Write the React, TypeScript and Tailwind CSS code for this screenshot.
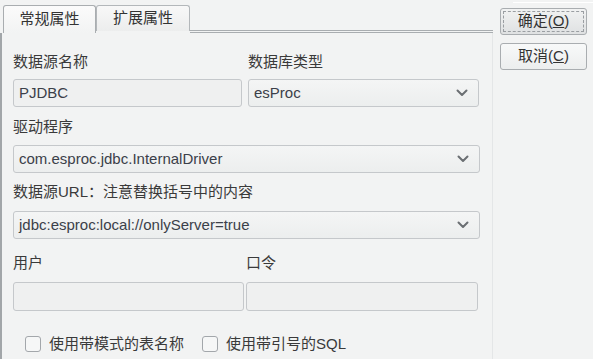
import React from 'react';

const font = { fontFamily: '"Liberation Sans", "Noto Sans CJK SC", sans-serif' };

const Chevron: React.FC = () => (
  <svg width="12" height="8" viewBox="0 0 12 8" className="text-[#6b6f73]">
    <path d="M1.5 1.5 L6 6 L10.5 1.5" fill="none" stroke="currentColor" strokeWidth="2" strokeLinecap="round" strokeLinejoin="round" />
  </svg>
);

const Field: React.FC<{ value?: string; select?: boolean; className?: string }> = ({ value, select, className }) => (
  <div
    className={`flex items-center justify-between rounded-[3px] border border-[#c5c8cb] pl-[5px] pr-[10px] text-[15px] text-[#3b4049] ${
      select ? 'bg-gradient-to-b from-[#f4f5f5] to-[#eceeee]' : 'bg-[#eff0f0]'
    } ${className ?? ''}`}
  >
    <span>{value}</span>
    {select && <Chevron />}
  </div>
);

const Label: React.FC<{ children: React.ReactNode; className?: string }> = ({ children, className }) => (
  <div className={`h-[20px] leading-[20px] text-[15px] text-[#3a3a3a] ${className ?? ''}`}>{children}</div>
);

const Check: React.FC<{ label: string }> = ({ label }) => (
  <div className="flex items-center gap-[8px]">
    <div className="h-[16px] w-[16px] rounded-[3px] border border-[#a3a7ab] bg-[#f6f7f7]" />
    <span className="text-[15px] text-[#3a3a3a]">{label}</span>
  </div>
);

const App: React.FC = () => {
  return (
    <div className="relative flex h-[359px] w-[593px] overflow-hidden bg-[#f2f3f3]" style={font}>
      <div className="absolute left-[513px] top-[2px] h-px w-[80px] bg-[#ffffff]" />
      {/* left: tabbed panel */}
      <div className="flex w-[493px] flex-col">
        <div className="flex h-[33px] items-end pl-[3px]">
          <div className="flex h-[28px] w-[93px] items-center justify-center rounded-t-[3px] border border-b-0 border-[#a9adb0] bg-gradient-to-b from-[#fbfbfb] to-[#f2f3f3] text-[15px] text-[#333]">
            常规属性
          </div>
          <div className="mb-[2px] flex h-[26px] w-[94px] items-center justify-center rounded-t-[3px] border border-b-0 border-[#b3b7ba] bg-gradient-to-b from-[#f8f8f8] to-[#eceded] text-[15px] text-[#333]">
            扩展属性
          </div>
          <div className="mb-[0px] h-[3px] flex-1 border-y border-[#a9adb0]" />
        </div>
        <div className="flex flex-1 flex-col border-l-2 border-r border-l-[#a2a6a9] border-r-[#e4e6e7] pl-[11px] pr-[12px]">
          <div className="mt-[19px] flex">
            <div className="w-[235px]">
              <Label>数据源名称</Label>
              <Field value="PJDBC" className="mt-[7px] h-[28px] w-[229px]" />
            </div>
            <div>
              <Label>数据库类型</Label>
              <Field value="esProc" select className="mt-[7px] h-[28px] w-[231px]" />
            </div>
          </div>
          <Label className="mt-[10px]">驱动程序</Label>
          <Field value="com.esproc.jdbc.InternalDriver" select className="mt-[8px] h-[28px] w-[467px]" />
          <Label className="mt-[9px]">数据源URL：注意替换括号中的内容</Label>
          <Field value="jdbc:esproc:local://onlyServer=true" select className="mt-[9px] h-[28px] w-[467px]" />
          <div className="mt-[14px] flex">
            <div className="w-[233px]">
              <Label>用户</Label>
              <Field className="mt-[9px] h-[29px] w-[231px]" />
            </div>
            <div>
              <Label>口令</Label>
              <Field className="mt-[9px] h-[29px] w-[232px]" />
            </div>
          </div>
          <div className="mt-[22px] flex gap-[18px] pl-[12px]">
            <Check label="使用带模式的表名称" />
            <Check label="使用带引号的SQL" />
          </div>
        </div>
      </div>
      {/* right: buttons */}
      <div className="flex flex-col gap-[8px] pl-[7px] pt-[8px]">
        <div className="h-[27px] w-[87px] rounded-[3px] border border-[#a9adb0] bg-gradient-to-b from-[#f1f2f2] to-[#dfe1e2] p-[2px]">
          <div className="flex h-full w-full items-center justify-center border border-dashed border-[#9a9ea2] text-[15px] text-[#333]">
            确定(<span className="underline">O</span>)
          </div>
        </div>
        <div className="flex h-[27px] w-[87px] items-center justify-center rounded-[3px] border border-[#a9adb0] bg-gradient-to-b from-[#f8f9f9] to-[#eceeee] text-[15px] text-[#333]">
          取消(<span className="underline">C</span>)
        </div>
      </div>
    </div>
  );
};

export default App;
